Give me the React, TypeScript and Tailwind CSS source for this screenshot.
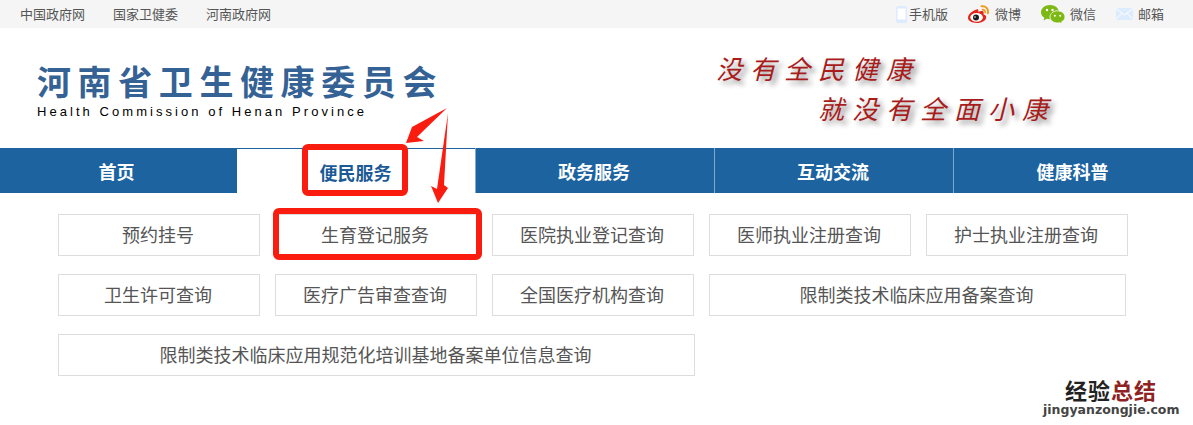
const cjk = "font-['Microsoft_YaHei','Noto_Sans_CJK_SC',sans-serif]";

const navItems = ["首页", "便民服务", "政务服务", "互动交流", "健康科普"];

const services = [
  { name: "预约挂号", width: "w-[202px]" },
  { name: "生育登记服务", width: "w-[202px]" },
  { name: "医院执业登记查询", width: "w-[202px]" },
  { name: "医师执业注册查询", width: "w-[202px]" },
  { name: "护士执业注册查询", width: "w-[202px]" },
  { name: "卫生许可查询", width: "w-[202px]" },
  { name: "医疗广告审查查询", width: "w-[202px]" },
  { name: "全国医疗机构查询", width: "w-[202px]" },
  { name: "限制类技术临床应用备案查询", width: "w-[417px]" },
  { name: "限制类技术临床应用规范化培训基地备案单位信息查询", width: "w-[637px]" },
];

function PhoneIcon() {
  return (
    <svg width="11" height="17" viewBox="0 0 11 17">
      <rect x="0" y="0" width="11" height="17" rx="2.500" fill="#dcebfd" />
      <rect x="1.500" y="2.500" width="8" height="11" fill="#ffffff" />
    </svg>
  );
}

function WeiboIcon() {
  return (
    <svg width="22" height="18" viewBox="0 0 22 18">
      <path d="M9.500 4.200C4.800 5.200 0 9 0 12.800 0 16 4 18 8.800 18c5.200 0 9.400-2.700 9.400-5.800 0-1.700-1.500-2.600-2.800-3 .6-1.500.4-2.800-.9-3.200-1.200-.3-2.900.2-4.200 1 .4-1.800-.2-3.100-.8-2.800z" fill="#e3241b" />
      <ellipse cx="8.600" cy="12.300" rx="6.300" ry="4.400" fill="#ffffff" />
      <circle cx="8" cy="12.500" r="3" fill="#1c1c1c" />
      <circle cx="7" cy="12" r="0.800" fill="#ffffff" />
      <path d="M13.500 1.300c4-.8 7.500 2.700 6.300 7" fill="none" stroke="#f09a1f" strokeWidth="2" strokeLinecap="round" />
      <path d="M14.300 4.700c1.800-.3 3.200 1.100 2.800 3" fill="none" stroke="#f09a1f" strokeWidth="1.600" strokeLinecap="round" />
    </svg>
  );
}

function WechatIcon() {
  return (
    <svg width="24" height="19" viewBox="0 0 24 19">
      <path d="M9 0C4 0 0 3.200 0 7.200c0 2.300 1.300 4.300 3.400 5.600l-.9 2.700 3.300-1.700c1 .3 2 .5 3.200.5 5 0 9-3.200 9-7.100C18 3.200 14 0 9 0z" fill="#7db814" />
      <path d="M16.500 5.800c-4.200 0-7.500 2.800-7.500 6.100s3.300 6.100 7.500 6.100c.8 0 1.600-.1 2.300-.3l2.500 1.300-.7-2.200c2.300-1.100 3.400-2.900 3.400-4.900 0-3.300-3.300-6.100-7.500-6.100z" fill="#7db814" stroke="#ffffff" strokeWidth="0.800" />
      <circle cx="6" cy="5" r="1.200" fill="#ffffff" />
      <circle cx="11.500" cy="5" r="1.200" fill="#ffffff" />
      <circle cx="13.800" cy="10.800" r="1" fill="#ffffff" />
      <circle cx="19.200" cy="10.800" r="1" fill="#ffffff" />
    </svg>
  );
}

function MailIcon() {
  return (
    <svg width="17" height="12" viewBox="0 0 17 12">
      <rect width="17" height="12" fill="#dcebfd" />
      <path d="M0 0.500 8.500 7 17 0.500M0 11.500 6 5.200M17 11.500 11 5.200" fill="none" stroke="#ffffff" strokeWidth="1" />
    </svg>
  );
}

function TopBar() {
  return (
    <div className="flex h-7 items-center justify-between bg-[#f5f5f5] pl-5 pr-[29px] text-[13px] text-[#555555]">
      <div className="flex gap-7">
        <span>中国政府网</span>
        <span>国家卫健委</span>
        <span>河南政府网</span>
      </div>
      <div className="flex items-center">
        <span className="flex items-center gap-[2px]"><PhoneIcon />手机版</span>
        <span className="ml-5 flex items-center gap-[5px]"><WeiboIcon />微博</span>
        <span className="ml-5 flex items-center gap-[5px]"><WechatIcon />微信</span>
        <span className="ml-5 flex items-center gap-[5px]"><MailIcon />邮箱</span>
      </div>
    </div>
  );
}

function Header() {
  return (
    <div className="flex h-[120px] bg-white">
      <div className="ml-[37px] w-[679px] pt-[30px]">
        <div className="text-[34px] font-bold leading-[46px] tracking-[6.600px] text-[#356295]">河南省卫生健康委员会</div>
        <div className="font-['Liberation_Sans',sans-serif] text-[13px] leading-[16px] tracking-[3.050px] text-black">
          Health Commission of Henan Province
        </div>
      </div>
      <div className="pt-[20px] text-[26px] italic leading-[40px] tracking-[8px] text-[#a81c1c] [text-shadow:4px_4px_5px_#999999]">
        <div>没有全民健康</div>
        <div className="ml-[102px]">就没有全面小康</div>
      </div>
    </div>
  );
}

function Nav() {
  return (
    <div className="grid h-[45px] grid-cols-[237px_238px_239px_239px_240px] bg-[#1c639f]">
      {navItems.map((item, i) => (
        <div
          key={item}
          className={
            i === 1
              ? "flex items-center justify-center border-t border-[#1c639f] bg-white pr-[1px] pt-[1px] text-lg font-bold text-[#1c5a96]"
              : i > 1
                ? "flex items-center justify-center border-l border-[#7fa8cb] pr-[2px] pt-[1px] text-lg font-bold text-white"
                : "flex items-center justify-center pr-[4px] pt-[1px] text-lg font-bold text-white"
          }
        >
          {item}
        </div>
      ))}
    </div>
  );
}

function Services() {
  return (
    <div className="flex flex-wrap gap-x-[15px] gap-y-[18px] pl-[58px] pr-[50px] pt-[21px]">
      {services.map((s) => (
        <div
          key={s.name}
          className={`flex h-[42px] items-center justify-center border border-[#dddddd] pb-[2px] pr-[2px] text-lg text-[#555555] ${s.width}`}
        >
          {s.name}
        </div>
      ))}
    </div>
  );
}

export default function App() {
  return (
    <div className={`relative h-[425px] w-[1193px] overflow-hidden bg-white ${cjk}`}>
      <TopBar />
      <Header />
      <Nav />
      <Services />

      {/* 红色标注 */}
      <div className="absolute left-[302px] top-[144px] h-[52px] w-[106px] rounded-[6px] border-[6px] border-[#fb1c10]" />
      <div className="absolute left-[273px] top-[208px] h-[52px] w-[209px] rounded-[6px] border-[6px] border-[#fb1c10]" />
      <svg className="absolute left-[400px] top-[105px]" width="55" height="105" viewBox="0 0 55 105">
        <polygon points="47,3 12,22 6,38 24,36 17,32" fill="#fb1c10" />
        <polygon points="48,8 44,80 48,83 38,98 31,81 37,84" fill="#fb1c10" />
      </svg>

      {/* 水印 */}
      <div className="absolute left-[1043px] top-[376px] w-[136px] bg-white text-center">
        <div className="text-[22px] font-bold leading-[26px] tracking-[1px]">
          <span className="text-[#222222]">经验</span>
          <span className="text-[#8f2323]">总结</span>
        </div>
        <div className="font-['DejaVu_Sans',sans-serif] text-[12.500px] font-bold leading-[16px] text-[#444444]">jingyanzongjie.com</div>
      </div>
    </div>
  );
}
